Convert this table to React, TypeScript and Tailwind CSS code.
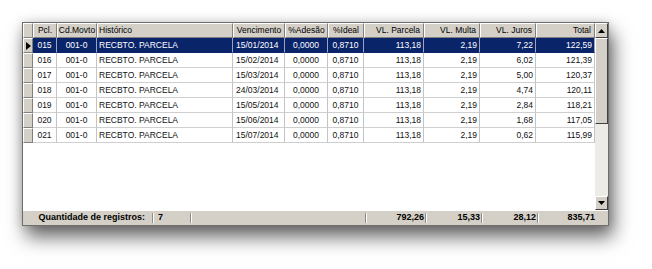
import React from "react";

const rows = [
  ["015", "001-0", "RECBTO. PARCELA", "15/01/2014", "0,0000", "0,8710", "113,18", "2,19", "7,22", "122,59"],
  ["016", "001-0", "RECBTO. PARCELA", "15/02/2014", "0,0000", "0,8710", "113,18", "2,19", "6,02", "121,39"],
  ["017", "001-0", "RECBTO. PARCELA", "15/03/2014", "0,0000", "0,8710", "113,18", "2,19", "5,00", "120,37"],
  ["018", "001-0", "RECBTO. PARCELA", "24/03/2014", "0,0000", "0,8710", "113,18", "2,19", "4,74", "120,11"],
  ["019", "001-0", "RECBTO. PARCELA", "15/05/2014", "0,0000", "0,8710", "113,18", "2,19", "2,84", "118,21"],
  ["020", "001-0", "RECBTO. PARCELA", "15/06/2014", "0,0000", "0,8710", "113,18", "2,19", "1,68", "117,05"],
  ["021", "001-0", "RECBTO. PARCELA", "15/07/2014", "0,0000", "0,8710", "113,18", "2,19", "0,62", "115,99"],
];

const align = [
  "justify-center",
  "justify-center",
  "justify-start pl-[2px]",
  "justify-start pl-[3px]",
  "justify-center",
  "justify-center",
  "justify-end pr-[2px]",
  "justify-end pr-[2px]",
  "justify-end pr-[2px]",
  "justify-end pr-[2px]",
];

const headerAlign = [
  "justify-center",
  "justify-center",
  "justify-start pl-[1px]",
  "justify-center",
  "justify-center",
  "justify-center",
  "justify-end pr-[3px]",
  "justify-end pr-[3px]",
  "justify-end pr-[3px]",
  "justify-end pr-[3px]",
];

const headers = ["Pcl.", "Cd.Movto", "Histórico", "Vencimento", "%Adesão", "%Ideal", "VL. Parcela", "VL. Multa", "VL. Juros", "Total"];

const cols = "grid grid-cols-[10px_24px_40px_136px_52px_43px_36px_60px_56px_56px_59px]";

function Sep() {
  return <span className="inline-block h-[10px] w-[2px] border-l border-[#8c8a84] border-r border-r-white" />;
}

export default function App() {
  return (
    <div
      className="w-[652px] h-[269px] bg-white pt-[22px] pl-[22px]"
      style={{ fontFamily: '"Liberation Sans", Arial, sans-serif' }}
    >
      <div className="w-[587px] h-[204px] border border-[#6e6d6a] bg-white flex flex-col shadow-[4px_11px_18px_rgba(0,0,0,0.6),0_0_10px_rgba(0,0,0,0.15)]">
        <div className="flex flex-1 min-h-0">
          <div className="w-[572px] flex flex-col">
            <div className={`${cols} h-[15px] text-[8.5px] text-black`}>
              <div className="bg-[#d4d0c8] border-t border-l border-white border-r border-r-[#808080] border-b border-b-[#808080]" />
              {headers.map((h, i) => (
                <div
                  key={h}
                  className={`bg-[#d4d0c8] flex items-center border-t border-l border-white border-r border-r-[#808080] border-b border-b-[#808080] whitespace-nowrap overflow-hidden ${headerAlign[i]}`}
                >
                  {h}
                </div>
              ))}
            </div>
            {rows.map((r, ri) => {
              const sel = ri === 0;
              return (
                <div key={r[0]} className={`${cols} h-[15px] text-[8.5px]`}>
                  <div className="bg-[#d4d0c8] border-t border-l border-white border-r border-r-[#808080] border-b border-b-[#808080] flex items-center justify-center">
                    {sel && (
                      <svg width="5" height="8" viewBox="0 0 5 8">
                        <path d="M0 0 L5 4 L0 8 Z" fill="#000" />
                      </svg>
                    )}
                  </div>
                  {r.map((c, ci) => (
                    <div
                      key={ci}
                      className={`flex items-center whitespace-nowrap border-r border-b ${
                        sel
                          ? "bg-[#0a246a] text-white border-r-[#9aa3c4] border-b-[#0a246a]"
                          : "bg-white text-[#111] border-r-[#c4c4c4] border-b-[#cfcfcf]"
                      } ${align[ci]}`}
                    >
                      {c}
                    </div>
                  ))}
                </div>
              );
            })}
            <div className="flex-1 bg-white" />
          </div>
          <div className="w-[13px] flex flex-col bg-[#ecebe6]">
            <div className="h-[15px] bg-[#d4d0c8] border-t border-l border-white border-r border-b border-r-[#404040] border-b-[#404040] flex items-center justify-center">
              <svg width="7" height="4" viewBox="0 0 7 4">
                <path d="M3.5 0 L7 4 L0 4 Z" fill="#000" />
              </svg>
            </div>
            <div className="h-[86px] bg-[#d4d0c8] border-t border-l border-white border-r border-b border-r-[#404040] border-b-[#404040]" />
            <div className="flex-1" />
            <div className="h-[14px] bg-[#d4d0c8] border-t border-l border-white border-r border-b border-r-[#404040] border-b-[#404040] flex items-center justify-center">
              <svg width="7" height="4" viewBox="0 0 7 4">
                <path d="M0 0 L7 0 L3.5 4 Z" fill="#000" />
              </svg>
            </div>
          </div>
        </div>
        <div className="h-[15px] bg-[#d4d0c8] border-t border-white flex items-center text-[9px] font-bold text-black whitespace-nowrap">
          <div className="w-[129px] flex items-center justify-end pr-[7px]">Quantidade de registros:</div>
          <Sep />
          <div className="w-[36px] pl-[4px]">7</div>
          <Sep />
          <div className="w-[173px]" />
          <Sep />
          <div className="w-[58px] text-right pr-[1px]">792,26</div>
          <Sep />
          <div className="w-[54px] text-right pr-[1px]">15,33</div>
          <Sep />
          <div className="w-[54px] text-right pr-[1px]">28,12</div>
          <Sep />
          <div className="w-[57px] text-right pr-[1px]">835,71</div>
        </div>
      </div>
    </div>
  );
}
